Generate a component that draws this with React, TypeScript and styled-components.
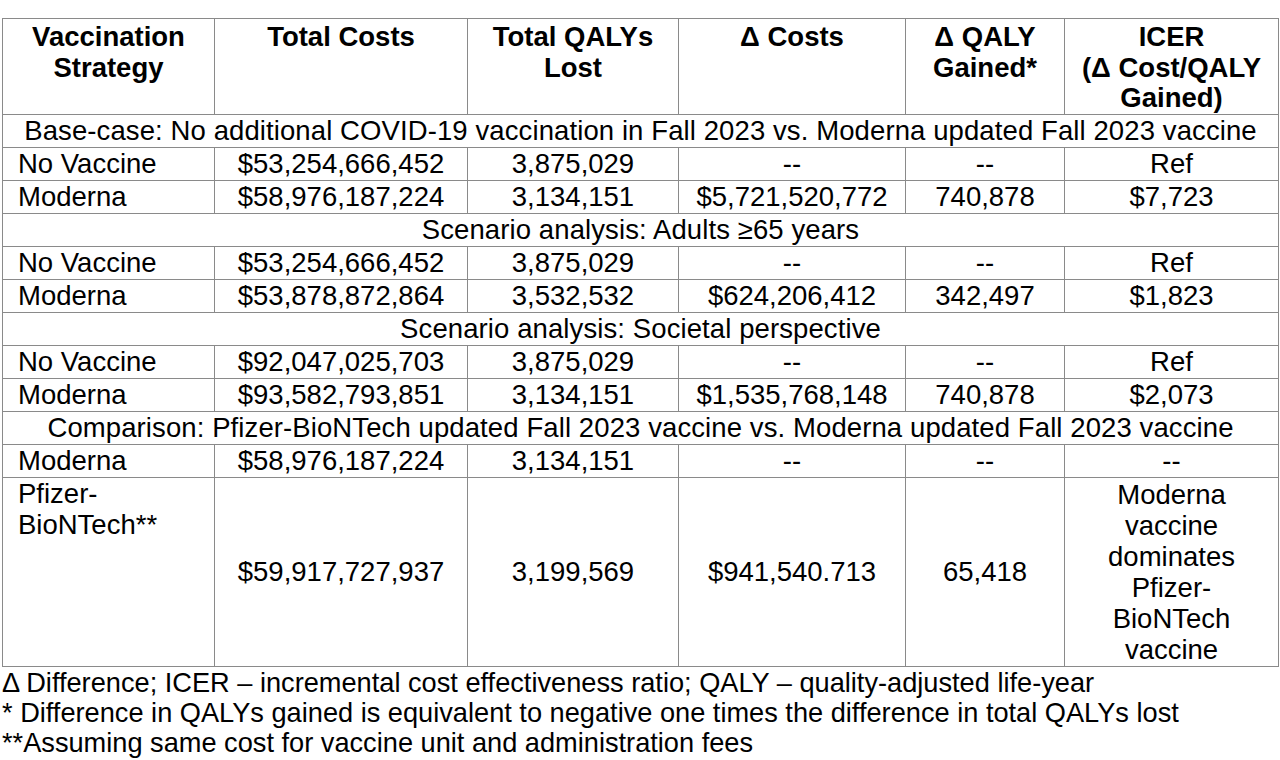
import { Fragment } from 'react';
import styled, { createGlobalStyle } from 'styled-components';

const GlobalStyle = createGlobalStyle`
  body {
    margin: 0;
    background: #ffffff;
    color: #000000;
    font-family: 'Liberation Sans', Arial, sans-serif;
  }
`;

const Page = styled.div`
  padding: 18px 0 0 2px;
  width: 1280px;
  height: 760px;
  box-sizing: border-box;
  overflow: hidden;
`;

const Table = styled.table`
  border-collapse: collapse;
  table-layout: fixed;
  width: 1276px;
  font-size: 27.5px;
  line-height: 30.5px;
`;

const HeadCell = styled.th`
  border: 1px solid #8a8a8a;
  font-weight: bold;
  text-align: center;
  vertical-align: top;
  padding: 3px 4px 0.5px;
  white-space: nowrap;
`;

const Cell = styled.td<{ $left?: boolean; $top?: boolean; $tall?: boolean }>`
  border: 1px solid #8a8a8a;
  text-align: ${({ $left }) => ($left ? 'left' : 'center')};
  vertical-align: ${({ $top }) => ($top ? 'top' : 'middle')};
  padding: ${({ $left }) => ($left ? '1px 4px 0.5px 15px' : '1px 4px 0.5px')};
  line-height: ${({ $tall }) => ($tall ? '31px' : '30.5px')};
  white-space: nowrap;
`;

const SpanCell = styled.td`
  border: 1px solid #8a8a8a;
  text-align: center;
  padding: 1px 2px 0.5px;
  letter-spacing: 0.1px;
  white-space: nowrap;
`;

const Notes = styled.div`
  font-size: 27.2px;
  line-height: 30px;
  padding-top: 1px;
  white-space: nowrap;
`;

const widths = [212, 253, 211, 227, 159, 214];

type Row = [string, string, string, string, string, string];

const groups: { title: string; rows: Row[] }[] = [
  {
    title:
      'Base-case: No additional COVID-19 vaccination in Fall 2023 vs. Moderna updated Fall 2023 vaccine',
    rows: [
      ['No Vaccine', '$53,254,666,452', '3,875,029', '--', '--', 'Ref'],
      ['Moderna', '$58,976,187,224', '3,134,151', '$5,721,520,772', '740,878', '$7,723'],
    ],
  },
  {
    title: 'Scenario analysis: Adults ≥65 years',
    rows: [
      ['No Vaccine', '$53,254,666,452', '3,875,029', '--', '--', 'Ref'],
      ['Moderna', '$53,878,872,864', '3,532,532', '$624,206,412', '342,497', '$1,823'],
    ],
  },
  {
    title: 'Scenario analysis: Societal perspective',
    rows: [
      ['No Vaccine', '$92,047,025,703', '3,875,029', '--', '--', 'Ref'],
      ['Moderna', '$93,582,793,851', '3,134,151', '$1,535,768,148', '740,878', '$2,073'],
    ],
  },
  {
    title:
      'Comparison: Pfizer-BioNTech updated Fall 2023 vaccine vs. Moderna updated Fall 2023 vaccine',
    rows: [['Moderna', '$58,976,187,224', '3,134,151', '--', '--', '--']],
  },
];

const App = () => {
  return (
    <Page>
      <GlobalStyle />
      <Table>
        <colgroup>
          {widths.map((w, i) => (
            <col key={i} style={{ width: w }} />
          ))}
        </colgroup>
        <thead>
          <tr>
            <HeadCell>
              Vaccination
              <br />
              Strategy
            </HeadCell>
            <HeadCell>Total Costs</HeadCell>
            <HeadCell>
              Total QALYs
              <br />
              Lost
            </HeadCell>
            <HeadCell>Δ Costs</HeadCell>
            <HeadCell>
              Δ QALY
              <br />
              Gained*
            </HeadCell>
            <HeadCell>
              ICER
              <br />
              (Δ Cost/QALY
              <br />
              Gained)
            </HeadCell>
          </tr>
        </thead>
        <tbody>
          {groups.map((g) => (
            <Fragment key={g.title}>
              <tr>
                <SpanCell colSpan={6}>{g.title}</SpanCell>
              </tr>
              {g.rows.map((r, i) => (
                <tr key={i}>
                  <Cell $left>{r[0]}</Cell>
                  {r.slice(1).map((v, j) => (
                    <Cell key={j}>{v}</Cell>
                  ))}
                </tr>
              ))}
            </Fragment>
          ))}
          <tr>
            <Cell $left $top>
              Pfizer-
              <br />
              BioNTech**
            </Cell>
            <Cell>$59,917,727,937</Cell>
            <Cell>3,199,569</Cell>
            <Cell>$941,540.713</Cell>
            <Cell>65,418</Cell>
            <Cell $tall>
              Moderna
              <br />
              vaccine
              <br />
              dominates
              <br />
              Pfizer-
              <br />
              BioNTech
              <br />
              vaccine
            </Cell>
          </tr>
        </tbody>
      </Table>
      <Notes>
        <div>Δ Difference; ICER – incremental cost effectiveness ratio; QALY – quality-adjusted life-year</div>
        <div>* Difference in QALYs gained is equivalent to negative one times the difference in total QALYs lost</div>
        <div>**Assuming same cost for vaccine unit and administration fees</div>
      </Notes>
    </Page>
  );
};

export default App;
